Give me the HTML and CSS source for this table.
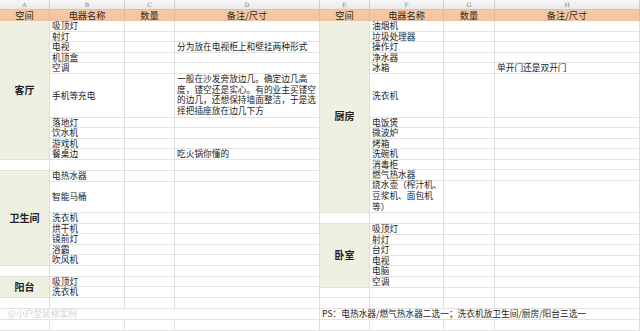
FILE: index.html
```html
<!DOCTYPE html>
<html lang="zh">
<head>
<meta charset="utf-8">
<title>家电规划表</title>
<link rel="stylesheet" href="styles.css">
</head>
<body>
<div class="page">
  <div class="sheet left">
    <div class="lt">A</div><div class="lt">B</div><div class="lt">C</div><div class="lt">D</div>
    <div class="hd">空间</div><div class="hd">电器名称</div><div class="hd">数量</div><div class="hd">备注/尺寸</div>

    <div class="room span10">客厅</div>
    <div class="c">吸顶灯</div><div class="c"></div><div class="c"></div>
    <div class="c">射灯</div><div class="c"></div><div class="c"></div>
    <div class="c">电视</div><div class="c"></div><div class="c">分为放在电视柜上和壁挂两种形式</div>
    <div class="c">机顶盒</div><div class="c"></div><div class="c"></div>
    <div class="c">空调</div><div class="c"></div><div class="c"></div>
    <div class="c">手机等充电</div><div class="c"></div><div class="c multi">一般在沙发旁放边几。确定边几高<br>度，镂空还是实心。有的业主买镂空<br>的边几，还想保持墙面整洁，于是选<br>择把插座放在边几下方</div>
    <div class="c">落地灯</div><div class="c"></div><div class="c"></div>
    <div class="c">饮水机</div><div class="c"></div><div class="c"></div>
    <div class="c">游戏机</div><div class="c"></div><div class="c"></div>
    <div class="c">餐桌边</div><div class="c"></div><div class="c">吃火锅你懂的</div>

    <div class="c blank"></div><div class="c"></div><div class="c"></div><div class="c"></div>

    <div class="room span7">卫生间</div>
    <div class="c">电热水器</div><div class="c"></div><div class="c"></div>
    <div class="c">智能马桶</div><div class="c"></div><div class="c"></div>
    <div class="c">洗衣机</div><div class="c"></div><div class="c"></div>
    <div class="c">烘干机</div><div class="c"></div><div class="c"></div>
    <div class="c">镜前灯</div><div class="c"></div><div class="c"></div>
    <div class="c">浴霸</div><div class="c"></div><div class="c"></div>
    <div class="c">吹风机</div><div class="c"></div><div class="c"></div>

    <div class="c blank"></div><div class="c"></div><div class="c"></div><div class="c"></div>

    <div class="room span2">阳台</div>
    <div class="c">吸顶灯</div><div class="c"></div><div class="c"></div>
    <div class="c">洗衣机</div><div class="c"></div><div class="c"></div>

    <div class="c blank"></div><div class="c"></div><div class="c"></div><div class="c"></div>
    <div class="c wide mark">@小户型装修案例</div>
    <div class="c blank"></div><div class="c"></div><div class="c"></div><div class="c"></div>
  </div>

  <div class="sheet right">
    <div class="lt">E</div><div class="lt">F</div><div class="lt">G</div><div class="lt">H</div>
    <div class="hd">空间</div><div class="hd">电器名称</div><div class="hd">数量</div><div class="hd">备注/尺寸</div>

    <div class="room span13">厨房</div>
    <div class="c">油烟机</div><div class="c"></div><div class="c"></div>
    <div class="c">垃圾处理器</div><div class="c"></div><div class="c"></div>
    <div class="c">操作灯</div><div class="c"></div><div class="c"></div>
    <div class="c">净水器</div><div class="c"></div><div class="c"></div>
    <div class="c">冰箱</div><div class="c"></div><div class="c">单开门还是双开门</div>
    <div class="c">洗衣机</div><div class="c"></div><div class="c"></div>
    <div class="c">电饭煲</div><div class="c"></div><div class="c"></div>
    <div class="c">微波炉</div><div class="c"></div><div class="c"></div>
    <div class="c">烤箱</div><div class="c"></div><div class="c"></div>
    <div class="c">洗碗机</div><div class="c"></div><div class="c"></div>
    <div class="c">消毒柜</div><div class="c"></div><div class="c"></div>
    <div class="c">燃气热水器</div><div class="c"></div><div class="c"></div>
    <div class="c multi">烧水壶（榨汁机、<br>豆浆机、面包机<br>等）</div><div class="c"></div><div class="c"></div>

    <div class="c blank"></div><div class="c"></div><div class="c"></div><div class="c"></div>

    <div class="room span6">卧室</div>
    <div class="c">吸顶灯</div><div class="c"></div><div class="c"></div>
    <div class="c">射灯</div><div class="c"></div><div class="c"></div>
    <div class="c">台灯</div><div class="c"></div><div class="c"></div>
    <div class="c">电视</div><div class="c"></div><div class="c"></div>
    <div class="c">电脑</div><div class="c"></div><div class="c"></div>
    <div class="c">空调</div><div class="c"></div><div class="c"></div>

    <div class="c blank"></div><div class="c"></div><div class="c"></div><div class="c"></div>
    <div class="c blank"></div><div class="c"></div><div class="c"></div><div class="c"></div>
    <div class="c wide">PS：电热水器/燃气热水器二选一；洗衣机放卫生间/厨房/阳台三选一</div>
    <div class="c blank"></div><div class="c"></div><div class="c"></div><div class="c"></div>
  </div>
</div>
</body>
</html>
```
FILE: styles.css
```css
* { box-sizing: border-box; }
html, body { margin: 0; padding: 0; background: #fff; }
body {
  width: 640px;
  height: 331px;
  overflow: hidden;
  font-family: "Noto Sans CJK SC", "Noto Sans", sans-serif;
  font-size: 8.7px;
  color: #222;
}
.page {
  display: flex;
  width: 640px;
  height: 331px;
}
.sheet {
  display: grid;
  width: 320px;
  height: 331px;
}
.left {
  grid-template-columns: 50px 75px 50px 145px;
  grid-template-rows: 10px 11px repeat(5, 10.6px) 44px repeat(4, 10.5px) 11px 11px 31px repeat(5, 10.6px) 11px 10.5px 10.5px 11px 11px 11px;
}
.right {
  grid-template-columns: 50px 74px 51px 145px;
  grid-template-rows: 10px 11px repeat(5, 10.6px) 44px repeat(6, 10.5px) 32px 11px repeat(6, 10.6px) 10.5px 11px 11px 11px;
}
.lt {
  background: linear-gradient(#f7f7f7, #e9e9e9);
  border-right: 1px solid #cfcfcf;
  border-bottom: 1px solid #c4c4c4;
  color: #777;
  font-family: "DejaVu Serif", serif;
  font-size: 6px;
  line-height: 9px;
  text-align: center;
}
.hd {
  background: linear-gradient(#f9c9a3, #f7c39b);
  border-right: 1px solid #ecb790;
  border-bottom: 1px solid #e9c3a6;
  text-align: center;
  line-height: 10px;
  font-size: 9.2px;
  color: #2a2a2a;
}
.c {
  display: flex;
  align-items: center;
  padding-left: 2px;
  border-right: 1px solid #dedede;
  border-bottom: 1px solid #e2e2e2;
  line-height: 9.5px;
  white-space: nowrap;
  overflow: visible;
}
.multi { line-height: 10.8px; }
.room {
  display: flex;
  align-items: center;
  justify-content: center;
  background: #eef0e2;
  border-right: 1px solid #dcdcdc;
  border-bottom: 1px solid #e2e2e2;
  font-weight: bold;
  font-size: 10px;
  line-height: 12px;
  color: #222;
}
.span13 { grid-row: span 13; }
.span10 { grid-row: span 10; }
.span7 { grid-row: span 7; }
.span6 { grid-row: span 6; }
.span2 { grid-row: span 2; }
.wide { grid-column: span 4; }
.mark {
  color: #cfcfcf;
  filter: blur(0.7px);
  padding-left: 8px;
}
```
